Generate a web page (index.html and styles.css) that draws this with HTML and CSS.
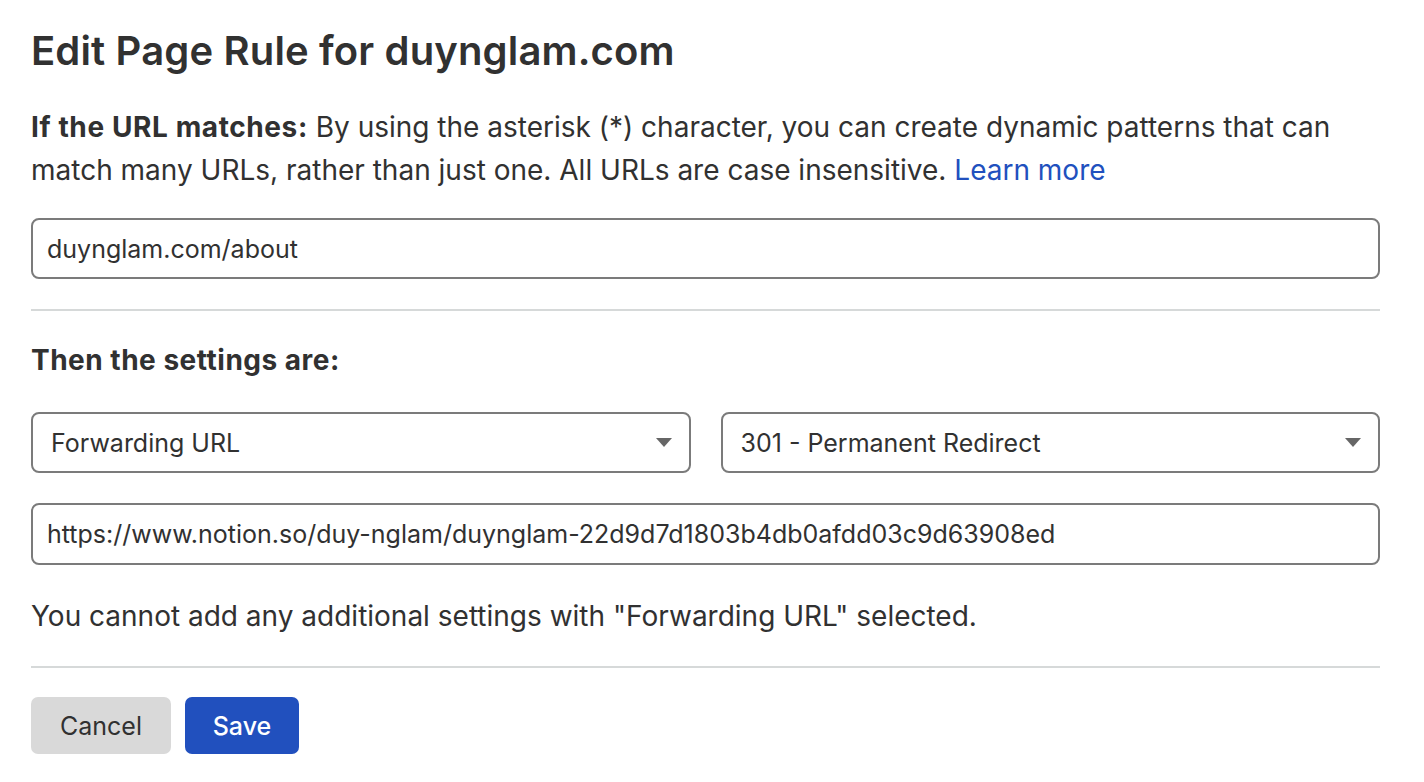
FILE: index.html
```html
<!DOCTYPE html>
<html lang="en">
<head>
<meta charset="utf-8">
<title>Edit Page Rule</title>
<link rel="stylesheet" href="styles.css">
</head>
<body>
<main class="page">
  <h1 class="title">Edit Page Rule for duynglam.com</h1>
  <p class="desc"><strong>If the URL matches:</strong> By using the asterisk (*) character, you can create dynamic patterns that can match many URLs, rather than just one. All URLs are case insensitive. <a class="link" href="#">Learn more</a></p>
  <div class="field">duynglam.com/about</div>
  <hr class="divider">
  <h2 class="subtitle">Then the settings are:</h2>
  <div class="row">
    <div class="select"><span>Forwarding URL</span><svg class="caret" width="16" height="9" viewBox="0 0 16 9"><path d="M0 0H16L8 9Z" fill="#666"/></svg></div>
    <div class="select"><span>301 - Permanent Redirect</span><svg class="caret" width="16" height="9" viewBox="0 0 16 9"><path d="M0 0H16L8 9Z" fill="#666"/></svg></div>
  </div>
  <div class="field">https://www.notion.so/duy-nglam/duynglam-22d9d7d1803b4db0afdd03c9d63908ed</div>
  <p class="note">You cannot add any additional settings with "Forwarding URL" selected.</p>
  <hr class="divider">
  <div class="actions">
    <button class="btn btn-cancel">Cancel</button>
    <button class="btn btn-save">Save</button>
  </div>
</main>
</body>
</html>
```

FILE: styles.css
```css
* { box-sizing: border-box; }
body {
  margin: 0;
  background: #fff;
  color: #313131;
  font-family: Inter, "Noto Sans", sans-serif;
}
.page {
  width: 1380px;
  padding: 27px 0 0 31px;
}
.title {
  margin: 0;
  font-size: 40px;
  font-weight: 600;
  line-height: 48px;
  letter-spacing: 0.15px;
}
.desc {
  margin: 31px 0 0;
  font-size: 28px;
  line-height: 43px;
}
.desc strong { font-weight: 700; letter-spacing: 0.6px; }
.link { color: #2150be; text-decoration: none; }
.field {
  margin-top: 26px;
  height: 61px;
  border: 2px solid #7b7b7b;
  border-radius: 8px;
  padding: 0 14px;
  display: flex;
  align-items: center;
  font-size: 25px;
}
.divider {
  margin: 30px 0 0;
  border: 0;
  border-top: 2px solid #d6d9d9;
}
.subtitle {
  margin: 32px 0 0;
  font-size: 28px;
  font-weight: 700;
  line-height: 34px;
  letter-spacing: 0.5px;
}
.row {
  margin-top: 35px;
  display: flex;
  gap: 30px;
}
.row + .field { margin-top: 30px; height: 62px; }
.select {
  flex: 1;
  height: 61px;
  border: 2px solid #7b7b7b;
  border-radius: 8px;
  padding: 0 17px 0 18px;
  display: flex;
  align-items: center;
  justify-content: space-between;
  font-size: 25px;
}
.note {
  margin: 30px 0 0;
  font-size: 28px;
  line-height: 43px;
}
.note + .divider { margin-top: 28px; }
.actions {
  margin-top: 29px;
  display: flex;
  gap: 14px;
}
.btn {
  height: 57px;
  border: 0;
  border-radius: 7px;
  font-family: inherit;
  font-size: 25px;
  padding: 0;
}
.btn-cancel { background: #d9d9d9; color: #313131; width: 140px; }
.btn-save { background: #2150be; color: #fff; width: 114px; font-weight: 500; }
```
